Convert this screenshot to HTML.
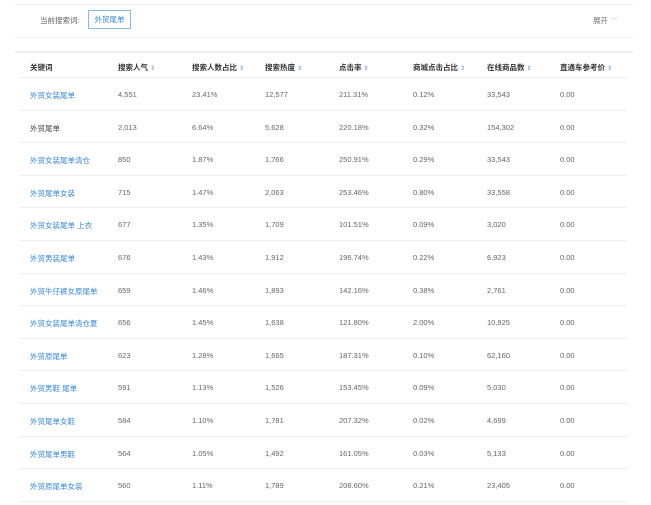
<!DOCTYPE html>
<html><head><meta charset="utf-8"><style>
body{margin:0;width:651px;height:505px;background:#fff;font-family:"Liberation Sans","Noto Sans CJK SC",sans-serif;font-size:7.5px;color:#666;overflow:hidden;position:relative}
.top{position:absolute;left:15px;top:4px;width:618px;height:32px;border-top:1px solid #f3f3f3;border-bottom:1px solid #f3f3f3}
.lbl{position:absolute;left:25px;top:10px;color:#666}
.tag{position:absolute;left:73px;top:5px;width:43px;height:19px;border:1px solid #8fb6ea;box-sizing:border-box;color:#3a87d6;line-height:17px;text-align:center}
.exp{position:absolute;left:578px;top:10px;color:#777}
.exp span{color:#ccc}
.card{position:absolute;left:15px;top:51px;width:618px;height:2px;background:linear-gradient(#e6e6e6,#fafafa)}
.tbl{position:absolute;left:20px;top:53px;width:607px}
.row{position:relative;height:31.6px;border-bottom:1px solid #eee}
.row.hd{height:24px}
.c{position:absolute;top:12px;white-space:nowrap}
.hd .c{top:9px;color:#333;font-weight:bold}
.hd i{font-style:normal;color:#6a90c0;font-weight:normal;font-size:6px}
.c:nth-child(1){left:10px}.c:nth-child(2){left:98px}.c:nth-child(3){left:172px}.c:nth-child(4){left:245px}
.c:nth-child(5){left:319px}.c:nth-child(6){left:393px}.c:nth-child(7){left:467px}.c:nth-child(8){left:540px}
a{color:#3a87d6;text-decoration:none}
.dk{color:#444}
</style></head><body>
<div class="top"><div class="lbl">当前搜索词:</div><div class="tag">外贸尾单</div><div class="exp">展开 <span>﹀</span></div></div>
<div class="card"></div>
<div class="tbl">
<div class="row hd"><div class="c">关键词</div><div class="c">搜索人气 <i>⇕</i></div><div class="c">搜索人数占比 <i>⇕</i></div><div class="c">搜索热度 <i>⇕</i></div><div class="c">点击率 <i>⇕</i></div><div class="c">商城点击占比 <i>⇕</i></div><div class="c">在线商品数 <i>⇕</i></div><div class="c">直通车参考价 <i>⇕</i></div></div>
<div class="row"><div class="c"><a>外贸女装尾单</a></div><div class="c">4,551</div><div class="c">23.41%</div><div class="c">12,577</div><div class="c">211.31%</div><div class="c">0.12%</div><div class="c">33,543</div><div class="c">0.00</div></div>
<div class="row"><div class="c dk">外贸尾单</div><div class="c">2,013</div><div class="c">6.64%</div><div class="c">5,628</div><div class="c">220.18%</div><div class="c">0.32%</div><div class="c">154,302</div><div class="c">0.00</div></div>
<div class="row"><div class="c"><a>外贸女装尾单清仓</a></div><div class="c">850</div><div class="c">1.87%</div><div class="c">1,766</div><div class="c">250.91%</div><div class="c">0.29%</div><div class="c">33,543</div><div class="c">0.00</div></div>
<div class="row"><div class="c"><a>外贸尾单女装</a></div><div class="c">715</div><div class="c">1.47%</div><div class="c">2,063</div><div class="c">253.46%</div><div class="c">0.80%</div><div class="c">33,558</div><div class="c">0.00</div></div>
<div class="row"><div class="c"><a>外贸女装尾单 上衣</a></div><div class="c">677</div><div class="c">1.35%</div><div class="c">1,709</div><div class="c">101.51%</div><div class="c">0.09%</div><div class="c">3,020</div><div class="c">0.00</div></div>
<div class="row"><div class="c"><a>外贸男装尾单</a></div><div class="c">676</div><div class="c">1.43%</div><div class="c">1,912</div><div class="c">196.74%</div><div class="c">0.22%</div><div class="c">6,923</div><div class="c">0.00</div></div>
<div class="row"><div class="c"><a>外贸牛仔裤女原尾单</a></div><div class="c">659</div><div class="c">1.46%</div><div class="c">1,893</div><div class="c">142.16%</div><div class="c">0.38%</div><div class="c">2,761</div><div class="c">0.00</div></div>
<div class="row"><div class="c"><a>外贸女装尾单清仓夏</a></div><div class="c">656</div><div class="c">1.45%</div><div class="c">1,638</div><div class="c">121.80%</div><div class="c">2.00%</div><div class="c">10,925</div><div class="c">0.00</div></div>
<div class="row"><div class="c"><a>外贸原尾单</a></div><div class="c">623</div><div class="c">1.28%</div><div class="c">1,665</div><div class="c">187.31%</div><div class="c">0.10%</div><div class="c">62,160</div><div class="c">0.00</div></div>
<div class="row"><div class="c"><a>外贸男鞋 尾单</a></div><div class="c">591</div><div class="c">1.13%</div><div class="c">1,526</div><div class="c">153.45%</div><div class="c">0.09%</div><div class="c">5,030</div><div class="c">0.00</div></div>
<div class="row"><div class="c"><a>外贸尾单女鞋</a></div><div class="c">584</div><div class="c">1.10%</div><div class="c">1,781</div><div class="c">207.32%</div><div class="c">0.02%</div><div class="c">4,699</div><div class="c">0.00</div></div>
<div class="row"><div class="c"><a>外贸尾单男鞋</a></div><div class="c">564</div><div class="c">1.05%</div><div class="c">1,492</div><div class="c">161.05%</div><div class="c">0.03%</div><div class="c">5,133</div><div class="c">0.00</div></div>
<div class="row"><div class="c"><a>外贸原尾单女装</a></div><div class="c">560</div><div class="c">1.11%</div><div class="c">1,789</div><div class="c">208.60%</div><div class="c">0.21%</div><div class="c">23,405</div><div class="c">0.00</div></div>
</div>
</body></html>
